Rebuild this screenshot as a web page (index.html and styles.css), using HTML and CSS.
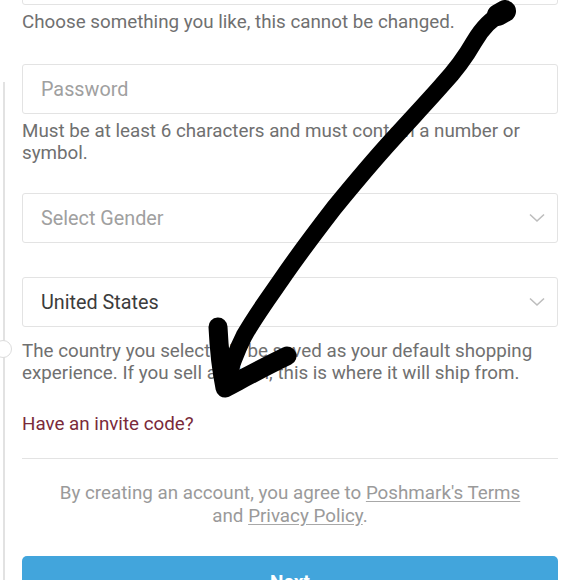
FILE: index.html
```html
<!DOCTYPE html>
<html>
<head>
<meta charset="utf-8">
<link rel="stylesheet" href="styles.css">
</head>
<body>
<div class="rail"></div>
<div class="knob"></div>
<div class="form">
  <div class="field field-top"></div>
  <p class="help help-first">Choose something you like, this cannot be changed.</p>
  <div class="field field-pw"><span class="placeholder">Password</span></div>
  <p class="help help-pw">Must be at least 6 characters and must contain a number or symbol.</p>
  <div class="field select field-gender">
    <span class="placeholder">Select Gender</span>
    <svg class="chev" width="16" height="10" viewBox="0 0 16 10"><path d="M1 1.5 L8 8 L15 1.5" fill="none" stroke="#bdbdbd" stroke-width="1.6"/></svg>
  </div>
  <div class="field select field-country">
    <span class="value">United States</span>
    <svg class="chev" width="16" height="10" viewBox="0 0 16 10"><path d="M1 1.5 L8 8 L15 1.5" fill="none" stroke="#bdbdbd" stroke-width="1.6"/></svg>
  </div>
  <p class="help help-country">The country you select will be saved as your default shopping experience. If you sell an item, this is where it will ship from.</p>
  <a class="invite">Have an invite code?</a>
  <hr class="divider">
  <p class="terms">By creating an account, you agree to <u>Poshmark's Terms</u><br>and <u>Privacy Policy</u>.</p>
  <button class="next">Next</button>
</div>
<svg class="arrow" width="579" height="580" viewBox="0 0 579 580">
  <path d="M504 12 C492 18 482 28 474 42 C466 56 456 70 442 85 C428 101 410 120 392 140 C372 162 352 186 334 208 C314 234 296 258 281 280 C267 300 254 318 244 336 C236 352 230 368 225 386" fill="none" stroke="#000" stroke-width="17" stroke-linecap="round" stroke-linejoin="round"/>
  <path d="M505 11 L498 15" fill="none" stroke="#000" stroke-width="22" stroke-linecap="round"/>
  <path d="M218 327 C219 348 221 368 225 388 C244 378 266 366 287 356" fill="none" stroke="#000" stroke-width="19" stroke-linecap="round" stroke-linejoin="round"/>
</svg>
</body>
</html>
```
FILE: styles.css
```css
html, body {
  margin: 0;
  padding: 0;
  background: #fff;
  overflow: hidden;
}
body {
  width: 579px;
  height: 580px;
  position: relative;
  font-family: Roboto, "Liberation Sans", sans-serif;
}
.form {
  padding: 0 21px 0 22px;
}
.field {
  box-sizing: border-box;
  height: 50px;
  border: 1px solid #e3e3e3;
  border-radius: 3px;
  display: flex;
  align-items: center;
  padding: 0 12px 0 18px;
  font-size: 19.8px;
}
.field-top {
  margin-top: -45px;
}
.select {
  justify-content: space-between;
}
.placeholder {
  color: #a0a0a0;
}
.value {
  color: #3c3c3c;
}
.help {
  margin: 0;
  color: #707070;
  font-size: 18.8px;
  line-height: 22px;
}
.help-first {
  margin-top: 6px;
}
.field-pw {
  margin-top: 31px;
}
.help-pw {
  margin-top: 6px;
}
.field-gender {
  margin-top: 29px;
}
.field-country {
  margin-top: 34px;
}
.help-country {
  margin-top: 13px;
}
.invite {
  display: block;
  margin-top: 29px;
  color: #7a2a3a;
  font-size: 18.8px;
  line-height: 22px;
}
.divider {
  border: 0;
  border-top: 1.5px solid #e3e3e3;
  margin: 23px 0 0 0;
}
.terms {
  margin: 23px 0 0 0;
  text-align: center;
  color: #9a9a9a;
  font-size: 18.8px;
  line-height: 23px;
}
.terms u {
  text-decoration-color: #a8a8a8;
  text-underline-offset: 2px;
}
.next {
  display: block;
  box-sizing: border-box;
  width: 100%;
  height: 50px;
  margin-top: 28px;
  border: 0;
  border-radius: 5px;
  background: #42a5dc;
  color: #fff;
  font-family: Roboto, "Liberation Sans", sans-serif;
  font-weight: 700;
  font-size: 19px;
}
.rail {
  position: absolute;
  left: 3px;
  top: 82px;
  width: 1.5px;
  height: 500px;
  background: #e2e2e2;
}
.knob {
  position: absolute;
  left: -6px;
  top: 340px;
  width: 16px;
  height: 16px;
  border: 1px solid #dcdcdc;
  border-radius: 50%;
  background: #fff;
}
.arrow {
  position: absolute;
  left: 0;
  top: 0;
  pointer-events: none;
}
```
